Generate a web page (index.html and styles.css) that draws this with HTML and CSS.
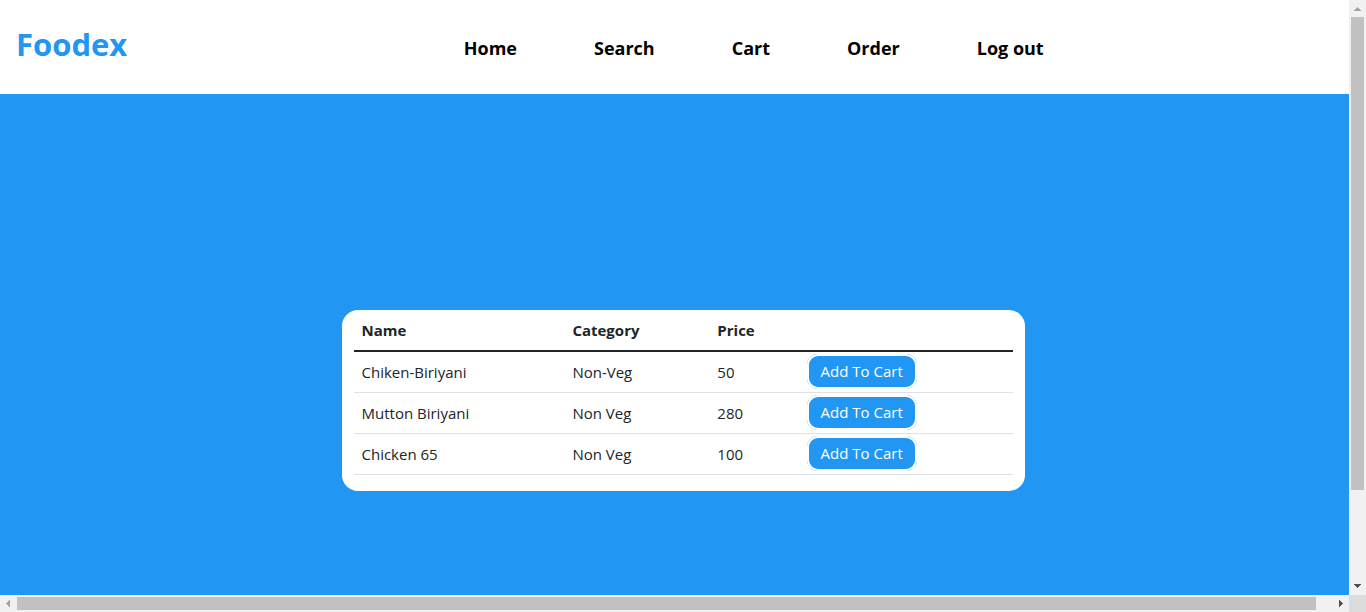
FILE: index.html
```html
<!DOCTYPE html>
<html lang="en">
<head>
<meta charset="utf-8">
<meta name="viewport" content="width=device-width, initial-scale=1">
<title>Foodex</title>
<link rel="stylesheet" href="styles.css">
</head>
<body>
<div class="frame">
  <div class="page">
    <header class="header">
      <h1 class="brand">Foodex</h1>
      <nav class="nav">
        <a href="#home">Home</a>
        <a href="#search">Search</a>
        <a href="#cart">Cart</a>
        <a href="#order">Order</a>
        <a href="#logout">Log out</a>
      </nav>
    </header>
    <main class="main">
      <section class="card">
        <table class="menu">
          <thead>
            <tr><th class="col-name" scope="col">Name</th><th class="col-category" scope="col">Category</th><th class="col-price" scope="col">Price</th><td></td></tr>
          </thead>
          <tbody>
            <tr><td>Chiken-Biriyani</td><td>Non-Veg</td><td>50</td><td class="action"><button class="add" type="button">Add To Cart</button></td></tr>
            <tr><td>Mutton Biriyani</td><td>Non Veg</td><td>280</td><td class="action"><button class="add" type="button">Add To Cart</button></td></tr>
            <tr><td>Chicken 65</td><td>Non Veg</td><td>100</td><td class="action"><button class="add" type="button">Add To Cart</button></td></tr>
          </tbody>
        </table>
      </section>
    </main>
  </div>
  <div class="bar bar-v" aria-hidden="true">
    <svg class="arrow" viewBox="0 0 17 17" shape-rendering="crispEdges"><path fill="#a3a3a3" d="M8 7h1v1h1v1h1v1h1v1H5v-1h1V9h1V8h1z"/></svg>
    <div class="track"><div class="thumb"></div></div>
    <svg class="arrow" viewBox="0 0 17 17" shape-rendering="crispEdges"><path fill="#505050" d="M5 6h7v1h-1v1h-1v1H9v1H8V9H7V8H6V7H5z"/></svg>
  </div>
  <div class="bar bar-h" aria-hidden="true">
    <svg class="arrow" viewBox="0 0 17 17" shape-rendering="crispEdges"><path fill="#a3a3a3" d="M10 5v7H9v-1H8v-1H7V9H6V8h1V7h1V6h1V5z"/></svg>
    <div class="track"><div class="thumb"></div></div>
    <svg class="arrow" viewBox="0 0 17 17" shape-rendering="crispEdges"><path fill="#505050" d="M7 5h1v1h1v1h1v1h1v1h-1v1H9v1H8v1H7z"/></svg>
  </div>
  <div class="corner"></div>
</div>
</body>
</html>
```
FILE: styles.css
```css
* { box-sizing: border-box; }

body {
  margin: 0;
  font-family: "Open Sans", "Noto Sans", sans-serif;
  font-size: 15px;
  line-height: 24px;
  color: #212529;
}

.frame {
  display: grid;
  grid-template-columns: minmax(0, 1fr) 17px;
  grid-template-rows: minmax(0, 1fr) 17px;
  height: 100vh;
}

.page {
  display: flex;
  flex-direction: column;
  overflow: hidden;
  background: #2196f3;
}

.header {
  display: flex;
  align-items: center;
  padding: 20px 16px 26px;
  background: #fff;
}

.brand {
  flex: 0 0 34%;
  margin: 0;
  font-size: 31px;
  line-height: 48px;
  font-weight: 700;
  color: #2196f3;
}

.nav {
  display: flex;
  gap: 77px;
  padding-top: 8px;
  font-size: 18px;
  font-weight: 700;
}

.nav a {
  color: #000;
  text-decoration: none;
  white-space: nowrap;
}

.main {
  flex: 1;
  padding-top: 216px;
}

.card {
  width: 50vw;
  margin-left: 25vw;
  padding: 0 12px 16px;
  border-radius: 16px;
  background: #fff;
}

.menu {
  width: 100%;
  table-layout: fixed;
  border-collapse: separate;
  border-spacing: 0;
}

.menu th,
.menu td {
  padding: 8px;
  text-align: left;
  border-bottom: 1px solid #dee2e6;
}

.menu thead th,
.menu thead td { border-bottom: 2px solid #212529; }

.col-name { width: 32%; }
.col-category { width: 22%; }
.col-price { width: 14%; }

.menu .action { padding: 2px 5px 3px; }

.add {
  display: block;
  padding: 5px 14px 6px;
  border: 0;
  border-radius: 11px;
  background: #2196f3;
  box-shadow: inset 0 0 0 2px #fff;
  color: #fff;
  font: inherit;
}

.bar {
  display: flex;
  background: #f1f1f1;
}

.bar-v { flex-direction: column; }

.arrow {
  flex: none;
  width: 17px;
  height: 17px;
}

.track {
  display: flex;
  flex: 1;
}

.bar-v .track {
  flex-direction: column;
  padding: 0 2px;
}

.bar-h .track { padding: 2px 0; }

.thumb { background: #c1c1c1; }
.bar-v .thumb { height: 84.3%; }
.bar-h .thumb { width: 98.8%; }

.corner { background: #dcdcdc; }
```
